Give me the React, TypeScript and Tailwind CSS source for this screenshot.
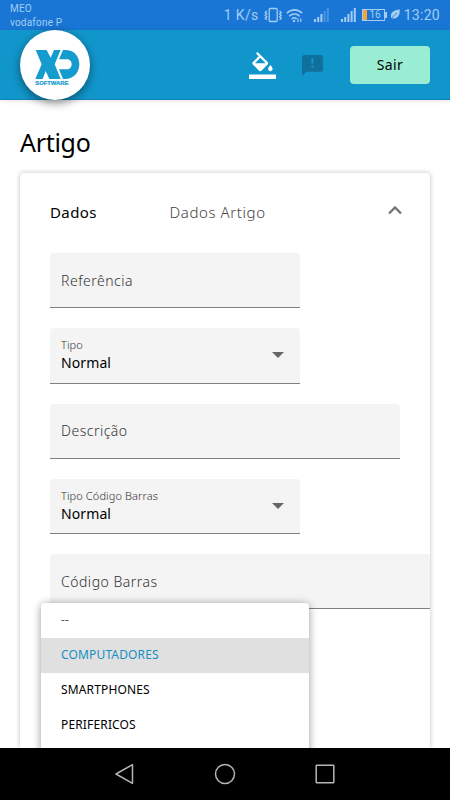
import type { ReactNode } from "react"
import clsx from "clsx"

const categories = ["--", "COMPUTADORES", "SMARTPHONES", "PERIFERICOS"]

export default function App() {
  return (
    <div className="relative flex h-[800px] w-[450px] flex-col overflow-hidden bg-white font-['Noto_Sans',sans-serif] text-black">
      <StatusBar />
      <Header />
      <main className="flex min-h-0 flex-1 flex-col overflow-hidden px-5">
        <h1 className="mt-[25px] mb-[14px] h-[34px] text-[25px] leading-[34px] tracking-[-0.3px]">
          Artigo
        </h1>
        <ArticlePanel />
      </main>
      <CategoryMenu selected="COMPUTADORES" />
      <NavigationBar />
    </div>
  )
}

function StatusBar() {
  return (
    <div className="flex h-[30px] shrink-0 items-center justify-between bg-[#1976d5] px-[10px] font-[Roboto,sans-serif] text-[#a3cdf3]">
      <div className="pt-[2px] text-[10px] leading-[14px] tracking-[0.2px]">
        <div>MEO</div>
        <div>vodafone P</div>
      </div>
      <div className="flex items-center">
        <span className="text-[14px] tracking-[0.35px]">1 K/s</span>
        <VibrateIcon />
        <WifiIcon />
        <SignalIcon className="ml-[11px]" weak />
        <SignalIcon className="ml-[12px]" />
        <BatteryIcon />
        <LeafIcon />
        <span className="ml-[4px] text-[14px] tracking-[0.3px]">13:20</span>
      </div>
    </div>
  )
}

function Header() {
  return (
    <header className="relative z-10 flex h-[70px] shrink-0 items-center bg-[#1196cb] px-5 shadow-[inset_0_-1px_0_#0f82b2,0_1px_5px_rgba(0,0,0,0.1)]">
      <div className="size-[70px] shrink-0 rounded-full bg-white shadow-[0_3px_10px_rgba(0,0,0,0.45)]">
        <Logo />
      </div>
      <PaintIcon />
      <FeedbackIcon />
      <button className="ml-auto h-[38px] w-[80px] rounded-[4px] bg-[#9aecd3] pb-[2px] text-[14px] tracking-[0.4px]">
        Sair
      </button>
    </header>
  )
}

function ArticlePanel() {
  return (
    <section className="flex flex-1 flex-col overflow-hidden rounded-t-[4px] bg-white shadow-[0_0_5px_rgba(0,0,0,0.25)]">
      <div className="flex h-20 shrink-0 items-center px-[30px] pb-[2px] text-[15px]">
        <span className="w-[119.5px] tracking-[0.4px]">Dados</span>
        <span className="flex-1 font-light tracking-[0.6px] text-[#444]">Dados Artigo</span>
        <svg className="relative top-[-2px] mr-[-3px] w-4" viewBox="0 0 16 16">
          <path d="M2 11.5 8 5.5l6 6" fill="none" stroke="#757575" strokeWidth="2.4" />
        </svg>
      </div>
      <div className="flex flex-col gap-5 pl-[30px]">
        <Field label="Referência" className="w-[250px]" />
        <Field label="Tipo" value="Normal" className="w-[250px]" />
        <Field label="Descrição" className="w-[350px]" />
        <Field label="Tipo Código Barras" value="Normal" className="w-[250px]" />
        <Field label="Código Barras" className="w-[400px]" />
      </div>
    </section>
  )
}

interface FieldProps {
  label: string
  value?: string
  className?: string
}

/**
 * Field is a filled form input. With a value it becomes a select, with its
 * label floating above the value.
 */
function Field({ label, value, className }: FieldProps) {
  return (
    <div
      className={clsx(
        "flex h-[55.3px] shrink-0 items-center rounded-t-[4px] border-b border-[#808080] bg-[#f4f4f4] px-[11px]",
        className,
      )}
    >
      {value ? (
        <>
          <div className="flex-1">
            <div className="text-[11px] leading-[15px] font-light tracking-[0.1px] text-[#333]">
              {label}
            </div>
            <div className="text-[14px] leading-[21px] tracking-[0.1px]">{value}</div>
          </div>
          <svg className="mr-[5px] w-3" viewBox="0 0 12 6">
            <path d="M0 0h12L6 6z" fill="#666" />
          </svg>
        </>
      ) : (
        <span className="text-[14px] font-light tracking-[0.5px] text-[#333]">{label}</span>
      )}
    </div>
  )
}

function CategoryMenu({ selected }: { selected: string }) {
  return (
    <ul className="absolute top-[602.5px] left-[41px] z-10 h-[160px] w-[268px] overflow-hidden rounded-t-[4px] bg-white shadow-[0_1px_8px_rgba(0,0,0,0.4)]">
      {categories.map((category) => (
        <li
          key={category}
          className={clsx(
            "flex h-[35px] items-center px-5 text-[12px] tracking-[0.15px]",
            category === "--" && "text-[#555]",
            category === selected && "bg-[#e0e0e0] text-[#1690c0]",
          )}
        >
          {category}
        </li>
      ))}
    </ul>
  )
}

function NavigationBar() {
  return (
    <nav className="z-20 flex h-[52px] shrink-0 items-center justify-center gap-[76px] bg-black">
      <NavIcon>
        <path d="M19.5 2.7v18.6L3 12z" />
      </NavIcon>
      <NavIcon>
        <circle cx="12" cy="12" r="9.5" />
      </NavIcon>
      <NavIcon>
        <rect x="3.2" y="3.2" width="17.6" height="17.6" rx="0.5" />
      </NavIcon>
    </nav>
  )
}

function NavIcon({ children }: { children: ReactNode }) {
  return (
    <svg
      className="size-6"
      viewBox="0 0 24 24"
      fill="none"
      stroke="#b5b5b5"
      strokeWidth="1.5"
      strokeLinejoin="round"
    >
      {children}
    </svg>
  )
}

function Logo() {
  return (
    <svg viewBox="0 0 210 210" fill="#159bce">
      <path d="M47 60h33l12 23 10-23h20l-18 43 18 44H88l-11-24-9 24H46l19-44z" />
      <path d="M129 60h7c26 0 42 18 42 43s-17 44-43 44h-6l-12-29h23c9 0 15-6 15-15s-6-15-15-15h-23z" />
      <text
        x="46"
        y="164"
        fontSize="16.5"
        fontWeight="700"
        fontFamily="Liberation Sans, sans-serif"
        textLength="99"
        lengthAdjust="spacingAndGlyphs"
        stroke="#159bce"
        strokeWidth="0.7"
      >
        SOFTWARE
      </text>
    </svg>
  )
}

function PaintIcon() {
  return (
    <svg className="ml-[159px] w-[27px]" viewBox="0 0 24 24" fill="#fff">
      <path d="M16.56 8.94 7.62 0 6.21 1.41l2.38 2.38-5.15 5.15c-.59.59-.59 1.54 0 2.12l5.5 5.5c.29.29.68.44 1.06.44s.77-.15 1.06-.44l5.5-5.5c.59-.58.59-1.53 0-2.12zM5.21 10 10 5.21 14.79 10zM19 11.5s-2 2.17-2 3.5c0 1.1.9 2 2 2s2-.9 2-2c0-1.33-2-3.5-2-3.5zM0 20h24v4H0z" />
    </svg>
  )
}

function FeedbackIcon() {
  return (
    <svg className="ml-[24px] w-[25px]" viewBox="0 0 24 24">
      <path
        d="M20 2H4c-1.1 0-1.99.9-1.99 2L2 22l4-4h14c1.1 0 2-.9 2-2V4c0-1.1-.9-2-2-2z"
        fill="#10709c"
      />
      <path d="M11 5h2v5h-2zM11 12h2v2h-2z" fill="#1196cb" />
    </svg>
  )
}

function VibrateIcon() {
  return (
    <svg
      className="ml-[5px] w-[19px]"
      viewBox="0 0 19 16"
      fill="none"
      stroke="currentColor"
      strokeWidth="1.3"
    >
      <rect x="5.2" y="1.5" width="8" height="13" rx="1" />
      <path d="M2.8 4 1.2 5.5l1.6 1.4-1.6 1.5 1.6 1.4-1.6 1.5 1.6 1.4M15.6 4l1.6 1.5-1.6 1.4 1.6 1.5-1.6 1.4 1.6 1.5-1.6 1.4" />
    </svg>
  )
}

function WifiIcon() {
  return (
    <svg
      className="ml-[3px] w-[17px]"
      viewBox="0 0 17 15"
      fill="none"
      stroke="currentColor"
      strokeWidth="1.6"
    >
      <path d="M.8 5.2c4.4-4.4 11-4.4 15.4 0M3.2 8.2c3-3 7.5-3 10.5 0M5.6 11c1.7-1.6 3.7-1.6 5 0" />
      <circle cx="8" cy="13" r="1.2" fill="currentColor" stroke="none" />
      <path d="M12 10.5v3.5M14.8 10.5v3.5" strokeWidth="1.2" />
    </svg>
  )
}

function SignalIcon({ className, weak }: { className?: string; weak?: boolean }) {
  return (
    <svg className={clsx("w-[15px]", className)} viewBox="0 0 15 14" fill="currentColor">
      <path d="M0 11h2v3H0zM3.2 9h2v5h-2zM6.4 6h2v8h-2z" />
      <path d="M9.6 3h2v11h-2zM12.8 0h2v14h-2z" opacity={weak ? 0.35 : 1} />
    </svg>
  )
}

function BatteryIcon() {
  return (
    <div className="ml-[6px] flex items-center">
      <div className="flex h-[12px] w-[23px] items-center border border-current">
        <div className="h-full w-[4px] bg-[#f3a43a]" />
        <span className="flex-1 text-center text-[10px] leading-none">16</span>
      </div>
      <div className="h-[6px] w-[2px] bg-current" />
    </div>
  )
}

function LeafIcon() {
  return (
    <svg className="ml-[3px] w-[10px]" viewBox="0 0 10 12">
      <path d="M9.8.5C4 1 .8 3.4.9 7.2c0 1 .3 1.7.8 2.3C7.5 10 10 7 9.8.5z" fill="currentColor" />
      <path d="M.3 11.7C2 8.5 4 6.2 7 4" fill="none" stroke="#1976d5" strokeWidth=".8" />
    </svg>
  )
}
